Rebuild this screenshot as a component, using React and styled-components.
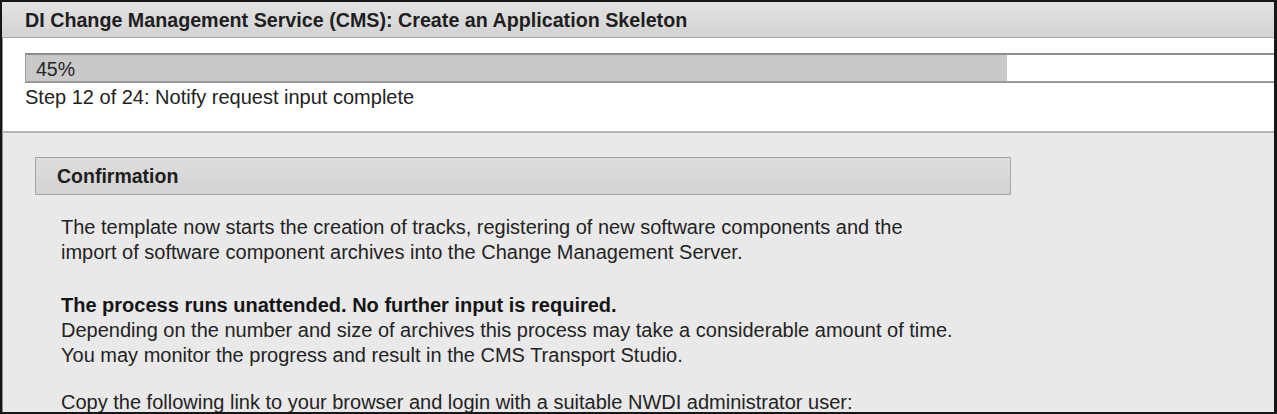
import React from 'react';
import styled, { createGlobalStyle } from 'styled-components';

const GlobalStyle = createGlobalStyle`
  body {
    margin: 0;
    background: #ffffff;
    font-family: 'Liberation Sans', Arial, sans-serif;
  }
`;

const App = () => {
    return (
        <>
            <GlobalStyle />
            <Frame>
                <Header>DI Change Management Service (CMS): Create an Application Skeleton</Header>
                <ProgressPanel>
                    <ProgressBar>
                        <ProgressFill $width={981} />
                        <ProgressLabel>45%</ProgressLabel>
                    </ProgressBar>
                    <StepText>Step 12 of 24: Notify request input complete</StepText>
                </ProgressPanel>
                <Content>
                    <SectionHeader>Confirmation</SectionHeader>
                    <Body>
                        <Para $gap={28}>
                            The template now starts the creation of tracks, registering of new software components and the
                            <br />
                            import of software component archives into the Change Management Server.
                        </Para>
                        <Para $gap={22}>
                            <Strong>The process runs unattended. No further input is required.</Strong>
                            <br />
                            Depending on the number and size of archives this process may take a considerable amount of time.
                            <br />
                            You may monitor the progress and result in the CMS Transport Studio.
                        </Para>
                        <Para $gap={0}>
                            Copy the following link to your browser and login with a suitable NWDI administrator user:
                        </Para>
                    </Body>
                </Content>
            </Frame>
        </>
    );
};

const Frame = styled.div`
    box-sizing: border-box;
    width: 1277px;
    height: 414px;
    border: 2px solid #161616;
    border-right-width: 3px;
    background: #e9e9e9;
    overflow: hidden;
    display: flex;
    flex-direction: column;
`;

const Header = styled.div`
    box-sizing: border-box;
    height: 36px;
    flex-shrink: 0;
    display: flex;
    align-items: center;
    padding-left: 23px;
    padding-top: 1px;
    background: linear-gradient(#e2e2e2, #d3d3d3);
    border-bottom: 1px solid #a9a9a9;
    font-size: 19.7px;
    font-weight: bold;
    color: #1e1e1e;
`;

const ProgressPanel = styled.div`
    box-sizing: border-box;
    height: 95px;
    flex-shrink: 0;
    padding: 15px 0 0 22px;
    background: #ffffff;
    border-left: 1px solid #8c8c8c;
    border-bottom: 2px solid #b4b4b4;
    overflow: hidden;
`;

const ProgressBar = styled.div`
    position: relative;
    box-sizing: border-box;
    width: 1300px;
    height: 30px;
    border-top: 2px solid #8e8e8e;
    border-left: 1px solid #a0a0a0;
    border-bottom: 2px solid #9a9a9a;
    background: #ffffff;
`;

const ProgressFill = styled.div`
    height: 100%;
    width: ${(p) => p.$width}px;
    background: #c9c9c9;
`;

const ProgressLabel = styled.span`
    position: absolute;
    left: 10px;
    top: 3px;
    font-size: 19.5px;
    color: #262626;
`;

const StepText = styled.div`
    margin-top: 3px;
    font-size: 20px;
    color: #222222;
`;

const Content = styled.div`
    flex: 1;
    padding: 24px 0 0 32px;
    border-left: 1px solid #8c8c8c;
`;

const SectionHeader = styled.div`
    box-sizing: border-box;
    width: 976px;
    height: 38px;
    display: flex;
    align-items: center;
    padding-left: 21px;
    background: linear-gradient(#dedede, #d2d2d2);
    border: 1px solid #a6a6a6;
    font-size: 19.5px;
    font-weight: bold;
    color: #1e1e1e;
`;

const Body = styled.div`
    padding: 20px 0 0 26px;
    font-size: 20px;
    line-height: 25px;
    color: #232323;
`;

const Para = styled.p`
    margin: 0 0 ${(p) => p.$gap}px 0;
`;

const Strong = styled.strong`
    font-weight: bold;
    color: #151515;
`;

export default App;
